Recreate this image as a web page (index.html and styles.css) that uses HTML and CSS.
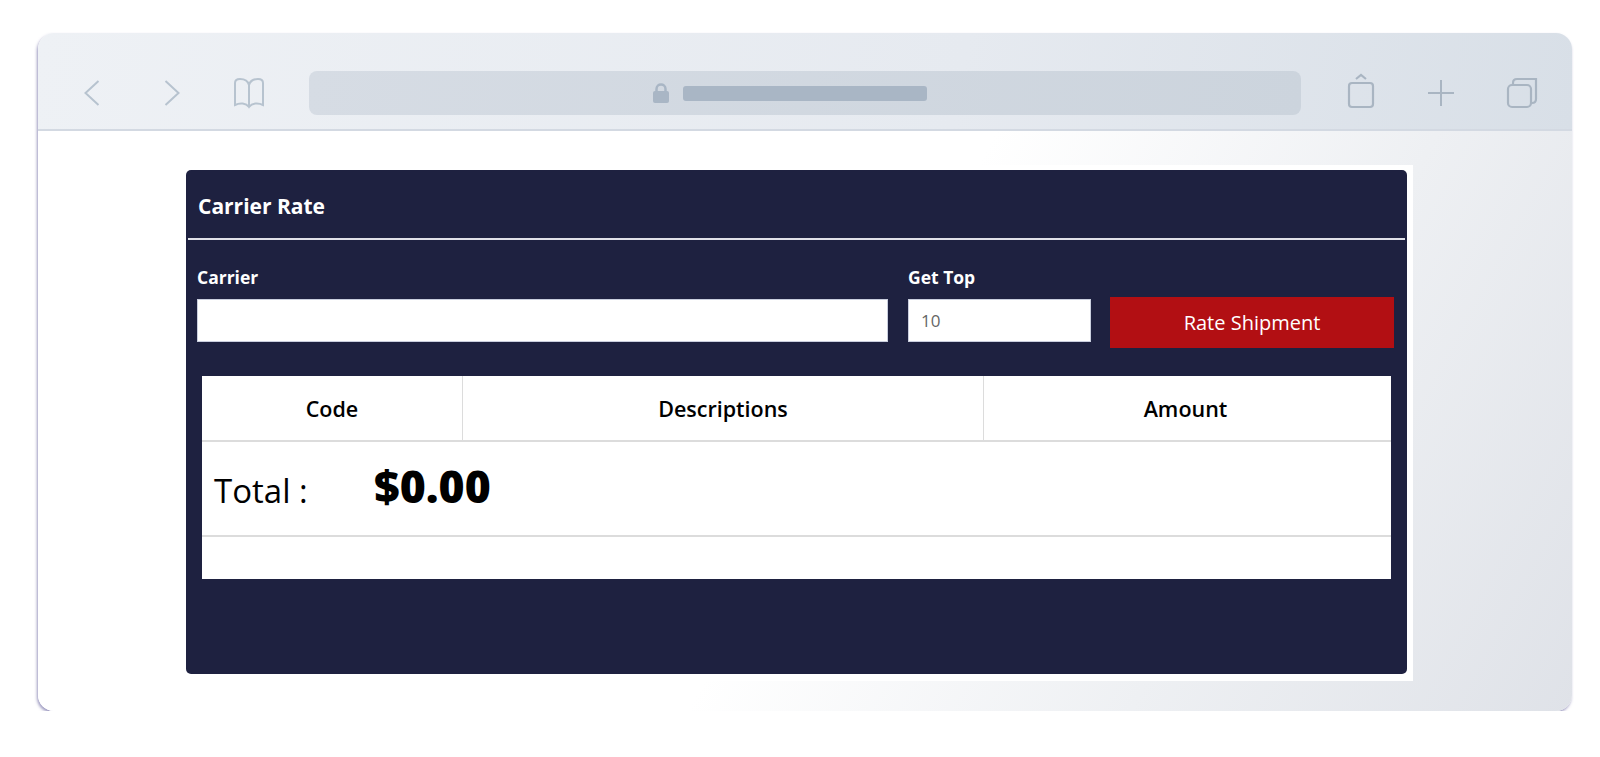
FILE: index.html
```html
<!DOCTYPE html>
<html lang="en">
<head>
<meta charset="UTF-8" />
<title>Carrier Rate</title>
<link rel="stylesheet" href="styles.css">
</head>
<body>
<div class="window">
  <div class="toolbar">
    <svg class="icon back" viewBox="0 0 32 32"><path d="M22.500 4 L9.500 16 L22.500 28" /></svg>
    <svg class="icon forward" viewBox="0 0 32 32"><path d="M9.500 4 L22.500 16 L9.500 28" /></svg>
    <svg class="icon book" viewBox="0 0 32 32"><path d="M16 8 C15 4 11 2 7 2 C4 2 2 3 2 6 V28 C7 25.500 13 26 16 30 C19 26 25 25.500 30 28 V6 C30 3 28 2 25 2 C21 2 17 4 16 8 Z M16 8 V29" /></svg>
    <div class="address">
      <svg class="lock" viewBox="0 0 16 20"><path class="lock-body" d="M2 8 H14 Q16 8 16 10 V18 Q16 20 14 20 H2 Q0 20 0 18 V10 Q0 8 2 8 Z" /><path class="lock-arc" d="M3.500 9 V6 C3.500 0 12.500 0 12.500 6 V9" /></svg>
      <div class="url"></div>
    </div>
    <svg class="icon share" viewBox="0 0 32 32"><path d="M11 2 L16 -2 L21 2" /><rect x="4" y="6" width="24" height="24" rx="3" /></svg>
    <svg class="icon plus" viewBox="0 0 32 32"><path d="M16 3 V29 M3 16 H29" /></svg>
    <svg class="icon tabs" viewBox="0 0 32 32"><path d="M7 7.500 V6 Q7 2 11 2 H30 V22 Q30 26 26 26 H25" /><rect x="2" y="8" width="23" height="22" rx="4" /></svg>
  </div>
  <div class="content">
    <div class="frame">
      <div class="panel">
        <div class="panel-title">Carrier Rate</div>
        <div class="form-row">
          <div class="field carrier-field">
            <label class="field-label">Carrier</label>
            <input class="field-input" type="text">
          </div>
          <div class="field top-field">
            <label class="field-label">Get Top</label>
            <input class="field-input" type="text" value="10">
          </div>
          <button class="rate-btn">Rate Shipment</button>
        </div>
        <div class="rates">
          <div class="rates-head">
            <div class="cell code-col">Code</div>
            <div class="cell desc-col">Descriptions</div>
            <div class="cell amount-col">Amount</div>
          </div>
          <div class="rates-total">
            <span class="total-label">Total :</span>
            <span class="total-value">$0.00</span>
          </div>
          <div class="rates-empty"></div>
        </div>
      </div>
    </div>
  </div>
</div>
</body>
</html>
```

FILE: styles.css
```css
body { margin:0; background:#fff; font-family:'Open Sans',sans-serif; }
.window { width:1534px; height:678px; margin:33px 0 0 38px; border-radius:16px; overflow:hidden; display:flex; flex-direction:column; box-shadow:-1px 2px 3px rgba(90,85,150,0.6); }

.toolbar { display:flex; align-items:center; box-sizing:border-box; height:98px; padding:39px 34px 15px 38px; background:linear-gradient(100deg,#eef1f5,#e6eaf0 60%,#d8dfe7); border-bottom:2px solid #d3d9e2; }
.icon { width:32px; height:32px; flex:none; fill:none; stroke:#b7c3cf; stroke-width:2; overflow:visible; }
.forward { margin-left:48px; }
.book { margin-left:45px; }
.share { margin-left:44px; stroke:#a9b5c2; stroke-width:2.200; }
.plus { margin-left:48px; stroke:#a9b5c2; }
.tabs { margin-left:49px; stroke:#a9b5c2; stroke-width:2.200; }
.address { flex:1; height:44px; margin-left:44px; border-radius:8px; background:linear-gradient(100deg,#d6dce4,#ccd4dd); display:flex; align-items:center; padding-left:344px; }
.lock { width:16px; height:20px; flex:none; }
.lock-body { fill:#a9b6c5; }
.lock-arc { fill:none; stroke:#a9b6c5; stroke-width:2.500; }
.url { width:244px; height:15px; margin-left:14px; border-radius:3px; background:#a9b6c5; }

.content { flex:1; padding:34px 0 0 142px; background:linear-gradient(118deg,#fff 52%,#eef0f3 76%,#dfe2e8 100%); }
.frame { width:1221px; padding:5px 6px 7px; background:#fff; }
.panel { height:504px; border-radius:5px; background:#1e2140; color:#fff; }
.panel-title { height:68px; line-height:72px; margin:0 2px; padding-left:10px; border-bottom:2px solid #e0e1e8; font-size:21px; font-weight:700; }

.form-row { display:flex; padding:27px 13px 0 11px; }
.field { display:flex; flex-direction:column; }
.carrier-field { width:691px; }
.top-field { width:183px; margin-left:20px; }
.field-label { height:32px; line-height:21px; font-size:17.500px; font-weight:700; }
.field-input { box-sizing:border-box; height:43px; padding:0 12px; border:1px solid #c9cede; border-radius:0; outline:none; background:#fff; color:#666; font-family:inherit; font-size:17px; }
.rate-btn { width:284px; height:51px; margin:30px 0 0 19px; border:none; background:#b20f13; color:#fff; font-family:inherit; font-size:20px; }

.rates { width:1189px; margin:28px 0 0 16px; background:#fff; color:#000; }
.rates-head { display:flex; height:64px; border-bottom:2px solid #dcdcdc; }
.cell { display:flex; align-items:center; justify-content:center; font-size:21.500px; font-weight:600; }
.code-col { width:260px; border-right:1px solid #dcdcdc; }
.desc-col { width:520px; border-right:1px solid #dcdcdc; }
.amount-col { flex:1; padding-right:4px; }
.rates-total { display:flex; align-items:center; height:93px; border-bottom:2px solid #dcdcdc; padding-left:12px; }
.total-label { width:160px; font-size:33px; padding-top:4px; }
.total-value { font-size:44.500px; font-weight:800; padding-bottom:6px; }
.rates-empty { height:42px; }
```
